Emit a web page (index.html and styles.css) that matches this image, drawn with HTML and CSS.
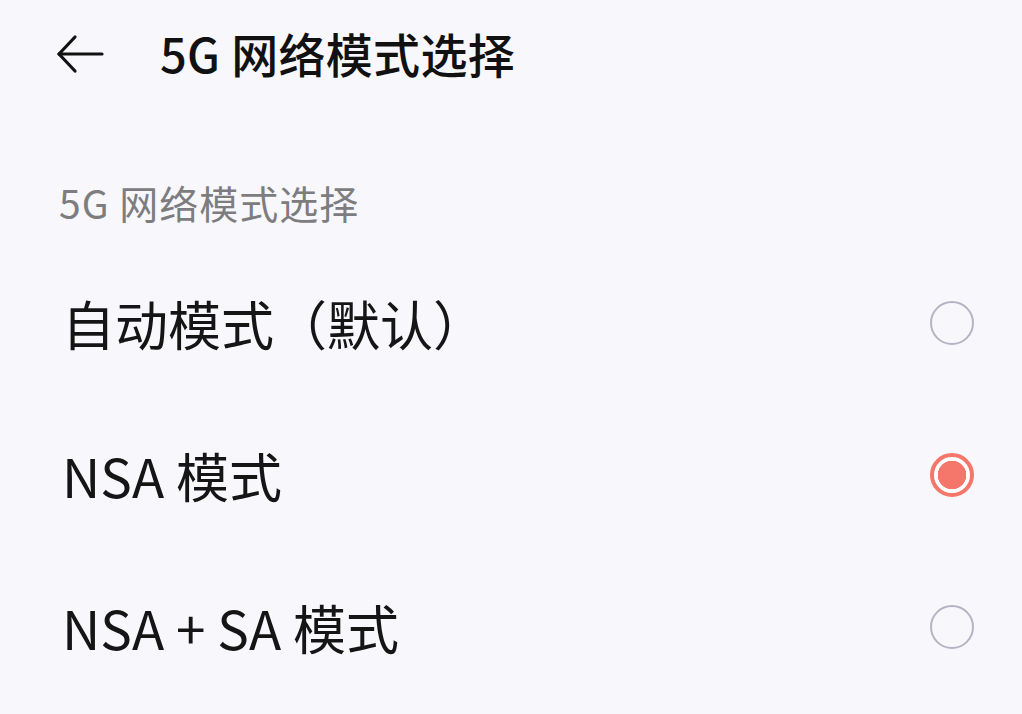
FILE: index.html
```html
<!DOCTYPE html>
<html lang="zh-CN">
<head>
<meta charset="utf-8">
<title>5G 网络模式选择</title>
<link rel="stylesheet" href="styles.css">
</head>
<body>
  <header class="topbar">
    <button class="back" aria-label="返回">
      <svg width="48" height="40" viewBox="0 0 48 40" fill="none" stroke="#111" stroke-width="3.2" stroke-linecap="round" stroke-linejoin="round">
        <path d="M46 20H3"/>
        <path d="M19 3L3 20L19 37"/>
      </svg>
    </button>
    <h1 class="title">5G 网络模式选择</h1>
  </header>

  <main class="settings">
    <div class="group-label">5G 网络模式选择</div>
    <ul class="options">
      <li class="option">
        <span class="option-text">自动模式（默认）</span>
        <span class="radio"></span>
      </li>
      <li class="option">
        <span class="option-text">NSA 模式</span>
        <span class="radio checked"></span>
      </li>
      <li class="option">
        <span class="option-text">NSA + SA 模式</span>
        <span class="radio"></span>
      </li>
    </ul>
  </main>
</body>
</html>
```

FILE: styles.css
```css
html, body {
  margin: 0;
  padding: 0;
}

body {
  width: 1022px;
  height: 714px;
  overflow: hidden;
  background: #f8f7fb;
  color: #111;
  font-family: "Noto Sans CJK SC", "Noto Sans", sans-serif;
}

.topbar {
  display: flex;
  align-items: center;
  height: 110px;
  padding-left: 56px;
  gap: 56px;
}

.back {
  display: flex;
  padding: 0;
  border: 0;
  background: none;
  margin-top: -2px;
}

.title {
  margin: -5px 0 0;
  font-size: 47px;
  font-weight: 500;
  letter-spacing: 0.3px;
  color: #111;
}

.settings {
  padding: 0 48px 0 59px;
}

.group-label {
  height: 137px;
  display: flex;
  align-items: center;
  padding-top: 46px;
  box-sizing: border-box;
  font-size: 39px;
  letter-spacing: 1px;
  color: #7d7d80;
}

.options {
  list-style: none;
  margin: 0;
  padding: 0;
}

.option {
  display: flex;
  align-items: center;
  justify-content: space-between;
  height: 152px;
}

.option-text {
  font-size: 53px;
  color: #151515;
  padding-left: 3px;
}

.radio {
  width: 40px;
  height: 40px;
  border-radius: 50%;
  border: 2px solid #b4b4c4;
  box-sizing: content-box;
}

.radio.checked {
  width: 36px;
  height: 36px;
  border: 4px solid #f5766b;
  background: radial-gradient(circle, #f5766b 0 14px, #ffffff 14.5px);
}
```
